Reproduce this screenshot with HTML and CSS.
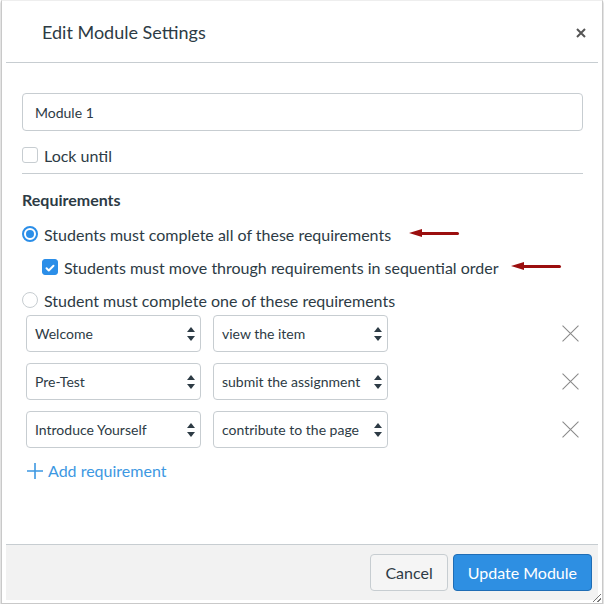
FILE: index.html
```html
<!DOCTYPE html>
<html>
<head>
<meta charset="utf-8">
<link rel="stylesheet" href="styles.css">
</head>
<body>
<div class="frame">
  <div class="dialog">
    <div class="header">
      <h1 class="title">Edit Module Settings</h1>
      <span class="close"><svg viewBox="0 0 10 10" width="10" height="10"><path d="M1 1L9 9M9 1L1 9" stroke="#555" stroke-width="2"/></svg></span>
    </div>
    <div class="body">
      <div class="text-input">Module 1</div>
      <label class="check-row lock">
        <span class="box"></span>
        <span>Lock until</span>
      </label>
      <div class="divider"></div>
      <div class="section-title">Requirements</div>
      <div class="option-row">
        <span class="radio on"></span>
        <span>Students must complete all of these requirements</span>
        <span class="arrow a1"></span>
      </div>
      <div class="option-row sub">
        <span class="box checked">
          <svg viewBox="0 0 16 16" width="16" height="16"><path d="M4 8.3l2.6 2.6L12 5.4" fill="none" stroke="#fff" stroke-width="2.2" stroke-linecap="round" stroke-linejoin="round"/></svg>
        </span>
        <span>Students must move through requirements in sequential order</span>
        <span class="arrow a2"></span>
      </div>
      <div class="option-row">
        <span class="radio"></span>
        <span>Student must complete one of these requirements</span>
      </div>
      <div class="req-list">
        <div class="req">
          <div class="select"><span>Welcome</span><span class="updown"></span></div>
          <div class="select"><span>view the item</span><span class="updown"></span></div>
          <span class="remove"><svg viewBox="0 0 16 16" width="17" height="17"><path d="M0.5 0.5L15.5 15.5M15.5 0.5L0.5 15.5" stroke="#8a8a8a" stroke-width="1"/></svg></span>
        </div>
        <div class="req">
          <div class="select"><span>Pre-Test</span><span class="updown"></span></div>
          <div class="select"><span>submit the assignment</span><span class="updown"></span></div>
          <span class="remove"><svg viewBox="0 0 16 16" width="17" height="17"><path d="M0.5 0.5L15.5 15.5M15.5 0.5L0.5 15.5" stroke="#8a8a8a" stroke-width="1"/></svg></span>
        </div>
        <div class="req">
          <div class="select"><span>Introduce Yourself</span><span class="updown"></span></div>
          <div class="select"><span>contribute to the page</span><span class="updown"></span></div>
          <span class="remove"><svg viewBox="0 0 16 16" width="17" height="17"><path d="M0.5 0.5L15.5 15.5M15.5 0.5L0.5 15.5" stroke="#8a8a8a" stroke-width="1"/></svg></span>
        </div>
      </div>
      <div class="add">
        <svg viewBox="0 0 16 16" width="16" height="16"><path d="M8 0V16M0 8H16" stroke="#3d98e2" stroke-width="1.6"/></svg>
        <span>Add requirement</span>
      </div>
    </div>
    <div class="footer">
      <button class="btn">Cancel</button>
      <button class="btn primary">Update Module</button>
      <span class="grip"></span>
    </div>
  </div>
</div>
</body>
</html>
```

FILE: styles.css
```css
* { box-sizing: border-box; }
html, body { margin: 0; padding: 0; background: #fff; }
body { font-family: Lato, "Liberation Sans", sans-serif; color: #2d3b45; }

.frame {
  position: relative;
  margin-left: 1px;
  width: 602px;
  height: 604px;
  border: 1px solid #c9c9c9;
  border-top-color: #eeeeee;
  box-shadow: 0 2px 2px rgba(0,0,0,0.35);
  padding: 4px 4px 3px 4px;
  background: #fff;
}
.dialog {
  height: 100%;
  display: flex;
  flex-direction: column;
  position: relative;
}
.header {
  height: 58px;
  flex: none;
  display: flex;
  align-items: center;
  justify-content: space-between;
  padding: 0 12px 0 36px;
  border-bottom: 1px solid #c7cdd1;
}
.title {
  margin: 0;
  font-size: 18px;
  font-weight: 400;
  color: #2d3b45;
  position: relative;
  top: -2px;
}
.close {
  display: inline-flex;
  position: relative;
  top: -1px;
}
.body {
  flex: 1;
  padding: 30px 15px 0 16px;
}
.text-input {
  height: 38px;
  border: 1px solid #c7cdd1;
  border-radius: 4px;
  padding: 0 12px;
  display: flex;
  align-items: center;
  font-size: 14px;
}
.check-row, .option-row {
  display: flex;
  align-items: center;
  gap: 6px;
  font-size: 16px;
}
.lock { margin-top: 15px; height: 18px; }
.box {
  width: 16px; height: 16px;
  border: 1px solid #c7cdd1;
  border-radius: 3px;
  display: inline-flex;
  flex: none;
}
.box.checked { background: #2b8ee8; border-color: #2b8ee8; }
.divider { margin-top: 9px; border-top: 1px solid #c7cdd1; }
.section-title { margin-top: 17px; font-size: 16px; font-weight: 700; height: 18px; line-height: 18px; }
.option-row { height: 20px; margin-top: 15px; }
.option-row.sub { margin-top: 13px; padding-left: 20px; }
.option-row + .option-row:not(.sub) { margin-top: 13px; }
.radio {
  width: 16px; height: 16px; flex: none;
  border: 1px solid #c7cdd1;
  border-radius: 50%;
  position: relative;
}
.radio.on { border: 2px solid #2b8ee8; }
.radio.on::after {
  content: ""; position: absolute;
  left: 2px; top: 2px; width: 8px; height: 8px;
  border-radius: 50%; background: #2b8ee8;
}
.arrow {
  position: relative;
  width: 50px; height: 10px;
}
.arrow::before {
  content: ""; position: absolute;
  left: 10px; right: 0; top: 3px; height: 3px;
  background: #9b0e0e;
  border-radius: 2px;
}
.arrow::after {
  content: ""; position: absolute;
  left: 0; top: 0;
  border-right: 13px solid #9b0e0e;
  border-top: 4.5px solid transparent;
  border-bottom: 4.5px solid transparent;
}
.a1 { margin-left: 12px; }
.a2 { margin-left: 6px; }

.req-list {
  margin-top: 5px;
  padding-left: 4px;
  display: flex;
  flex-direction: column;
  gap: 11px;
}
.req { display: flex; align-items: center; }
.select {
  width: 175px; height: 37px;
  border: 1px solid #c7cdd1;
  border-radius: 4px;
  display: flex; align-items: center; justify-content: space-between;
  padding: 0 5px 0 8px;
  font-size: 14px;
  margin-right: 12px;
}
.updown {
  width: 8px; height: 14px; position: relative; flex: none;
}
.updown::before, .updown::after {
  content: ""; position: absolute; left: 0;
  border-left: 4px solid transparent; border-right: 4px solid transparent;
}
.updown::before { top: 0; border-bottom: 5.5px solid #2d3b45; }
.updown::after { bottom: 0; border-top: 5.5px solid #2d3b45; }
.remove { margin-left: auto; margin-right: 4px; display: inline-flex; }

.add {
  margin-top: 13px;
  padding-left: 5px;
  display: flex; align-items: center; gap: 5px;
  color: #3d98e2;
  font-size: 16px;
}

.footer {
  flex: none;
  height: 56px;
  background: #f2f2f2;
  border-top: 1px solid #c7cdd1;
  display: flex;
  align-items: center;
  justify-content: flex-end;
  gap: 5px;
  padding: 0 6px 0 0;
  position: relative;
}
.btn {
  font-family: Lato, "Liberation Sans", sans-serif;
  font-size: 16px;
  height: 37px;
  padding: 0 14px;
  border: 1px solid #c7cdd1;
  border-radius: 4px;
  background: #f5f5f5;
  color: #2d3b45;
}
.btn.primary {
  background: #2e8fe2;
  border-color: #1f6db5;
  color: #fff;
  font-size: 16px;
  padding: 0 14px;
}
.grip {
  position: absolute; right: -3px; bottom: -2px;
  width: 8px; height: 8px;
  background: linear-gradient(135deg, transparent 45%, #777 45%, #777 55%, transparent 55%, transparent 75%, #777 75%, #777 85%, transparent 85%);
}
```
